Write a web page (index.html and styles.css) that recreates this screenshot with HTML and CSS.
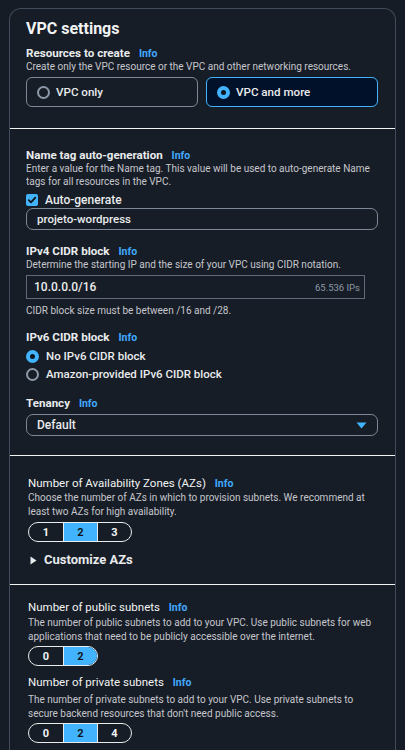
FILE: index.html
```html
<!DOCTYPE html>
<html>
<head>
<meta charset="utf-8">
<link rel="stylesheet" href="styles.css">
</head>
<body>
<div class="card">
  <section class="sec sec1">
    <h2 class="title">VPC settings</h2>
    <div class="label">Resources to create <span class="info">Info</span></div>
    <div class="desc">Create only the VPC resource or the VPC and other networking resources.</div>
    <div class="tiles">
      <div class="tile"><span class="radio"></span><span>VPC only</span></div>
      <div class="tile tile-on"><span class="radio radio-on"></span><span>VPC and more</span></div>
    </div>
  </section>

  <section class="sec sec2">
    <div class="label">Name tag auto-generation <span class="info">Info</span></div>
    <div class="desc">Enter a value for the Name tag. This value will be used to auto-generate Name tags for all resources in the VPC.</div>
    <div class="check-row">
      <span class="checkbox"><svg width="10" height="10" viewBox="0 0 10 10"><path d="M1.8 5.2 L4 7.4 L8.3 2.6" fill="none" stroke="#0f141a" stroke-width="1.8" stroke-linecap="round" stroke-linejoin="round"/></svg></span>
      <span>Auto-generate</span>
    </div>
    <div class="input input-round">projeto-wordpress</div>

    <div class="label mt-big">IPv4 CIDR block <span class="info">Info</span></div>
    <div class="desc">Determine the starting IP and the size of your VPC using CIDR notation.</div>
    <div class="input cidr"><span class="cidr-val">10.0.0.0/16</span><span class="cidr-ips">65.536 IPs</span></div>
    <div class="desc constraint">CIDR block size must be between /16 and /28.</div>

    <div class="label mt-mid">IPv6 CIDR block <span class="info">Info</span></div>
    <div class="radio-row radio-first"><span class="radio radio-on"></span><span>No IPv6 CIDR block</span></div>
    <div class="radio-row"><span class="radio"></span><span>Amazon-provided IPv6 CIDR block</span></div>

    <div class="label mt-mid">Tenancy <span class="info">Info</span></div>
    <div class="input input-round select"><span>Default</span>
      <svg class="caret" width="11" height="7" viewBox="0 0 11 7"><path d="M0.5 0.5 H10.5 L5.5 6.5 Z" fill="#42b4ff"/></svg>
    </div>
  </section>

  <section class="sec sec3">
    <div class="label2">Number of Availability Zones (AZs) <span class="info">Info</span></div>
    <div class="desc2">Choose the number of AZs in which to provision subnets. We recommend at least two AZs for high availability.</div>
    <div class="seg">
      <span class="seg-item">1</span><span class="seg-item seg-on">2</span><span class="seg-item">3</span>
    </div>
    <div class="expand">
      <svg width="7" height="9" viewBox="0 0 7 9"><path d="M0.5 0.5 L6.5 4.5 L0.5 8.5 Z" fill="#e9ebed"/></svg>
      <span>Customize AZs</span>
    </div>
  </section>

  <section class="sec sec4">
    <div class="label2">Number of public subnets <span class="info">Info</span></div>
    <div class="desc2">The number of public subnets to add to your VPC. Use public subnets for web applications that need to be publicly accessible over the internet.</div>
    <div class="seg">
      <span class="seg-item">0</span><span class="seg-item seg-on">2</span>
    </div>
    <div class="label2 mt-sub">Number of private subnets <span class="info">Info</span></div>
    <div class="desc2 desc-priv">The number of private subnets to add to your VPC. Use private subnets to secure backend resources that don't need public access.</div>
    <div class="seg seg-priv">
      <span class="seg-item">0</span><span class="seg-item seg-on">2</span><span class="seg-item">4</span>
    </div>
  </section>
</div>
</body>
</html>
```

FILE: styles.css
```css
* { box-sizing: border-box; }
html, body {
  margin: 0;
  padding: 0;
  background: #161c26;
  color: #e9ebed;
  font-family: Roboto, "Open Sans", sans-serif;
  overflow: hidden;
}
.card {
  margin: 8px 9px 0 9px;
  border: 1px solid #414d5c;
  border-bottom: none;
  border-radius: 12px 12px 0 0;
  background: #161d26;
  min-height: 760px;
}
.sec {
  padding: 0 16px 0 16px;
}
.sec + .sec {
  border-top: 1px solid #f2f3f3;
}
.sec1 { padding-top: 9px; padding-bottom: 21px; }
.sec2 { padding-top: 19px; padding-bottom: 19px; }
.sec3 { padding-top: 20px; padding-bottom: 14px; padding-left: 18px; }
.sec4 { padding-top: 15px; padding-left: 18px; }

.title {
  margin: 0;
  font-size: 16px;
  line-height: 22px;
  font-weight: 700;
  color: #f2f3f3;
}
.sec1 .label { margin-top: 6px; }
.label {
  font-size: 11.6px;
  line-height: 14px;
  height: 14px;
  font-weight: 700;
  color: #e9ebed;
  white-space: nowrap;
}
.info {
  color: #42a9ff;
  font-weight: 700;
  font-size: 10.5px;
  line-height: 1;
  margin-left: 6px;
}
.desc {
  font-size: 10px;
  line-height: 13px;
  color: #c6c6cd;
}
.tiles {
  display: flex;
  gap: 8px;
  margin-top: 4px;
  margin-right: 1px;
}
.tile {
  flex: 1;
  height: 30px;
  border: 1px solid #7d8998;
  border-radius: 6px;
  display: flex;
  align-items: center;
  gap: 6px;
  padding-left: 10px;
  font-size: 11.6px;
  font-weight: 500;
}
.tile-on {
  border-color: #42b4ff;
  background: #001129;
}
.radio {
  width: 13px;
  height: 13px;
  border-radius: 50%;
  border: 2px solid #8d99a8;
  flex: none;
}
.radio-on {
  border: 4px solid #42b4ff;
  background: #0f141a;
}

.check-row {
  margin-top: 4px;
  height: 16px;
  display: flex;
  align-items: center;
  gap: 7px;
  font-size: 12px;
  font-weight: 500;
}
.checkbox {
  width: 12px;
  height: 12px;
  border-radius: 2px;
  background: #42b4ff;
  display: flex;
  align-items: center;
  justify-content: center;
}
.input {
  height: 22px;
  border: 1px solid #7d8998;
  display: flex;
  align-items: center;
  padding-left: 10px;
  font-size: 11.5px;
  font-weight: 500;
  color: #e9ebed;
  margin-right: 1px;
}
.input-round { border-radius: 7px; }
.mt-big { margin-top: 14px; }
.mt-mid { margin-top: 13px; }
.cidr {
  margin-top: 4px;
  height: 24px;
  margin-right: 14px;
  padding-left: 7px;
  padding-right: 4px;
  justify-content: space-between;
  border-color: #5f6b7a;
}
.cidr-val { font-size: 12px; font-weight: 500; }
.cidr-ips { font-size: 9.5px; font-weight: 400; color: #8d99a8; }
.constraint { margin-top: 5px; }
.radio-row {
  height: 18px;
  display: flex;
  align-items: center;
  gap: 7px;
  font-size: 11.5px;
  font-weight: 500;
}
.radio-first { margin-top: 3px; }
.select {
  margin-top: 4px;
  justify-content: space-between;
  padding-right: 10px;
  font-size: 12px;
}
.caret { display: block; }

.label2 {
  font-size: 11.5px;
  line-height: 14px;
  height: 14px;
  font-weight: 400;
  color: #f2f3f3;
  white-space: nowrap;
}
.desc2 {
  margin-top: 1px;
  font-size: 10px;
  line-height: 14px;
  color: #c6c6cd;
}
.sec4 .desc2 { line-height: 13.5px; margin-top: 2px; }
.sec4 .desc-priv { margin-top: 4px; }
.seg {
  margin-top: 3px;
  display: inline-flex;
  height: 20px;
  border: 1px solid #e9ebed;
  border-radius: 10px;
  overflow: hidden;
}
.sec4 .seg { margin-top: 3px; }
.seg-item {
  width: 34px;
  display: flex;
  align-items: center;
  justify-content: center;
  font-size: 11px;
  font-weight: 700;
  color: #f2f3f3;
}
.seg-item + .seg-item { border-left: 1px solid #e9ebed; }
.seg-on {
  background: #42b4ff;
  color: #0f141a;
}
.expand {
  margin-top: 8px;
  display: flex;
  align-items: center;
  gap: 7px;
  padding-left: 2px;
  font-size: 13px;
  font-weight: 700;
  line-height: 20px;
}
.mt-sub { margin-top: 9px; }
```
